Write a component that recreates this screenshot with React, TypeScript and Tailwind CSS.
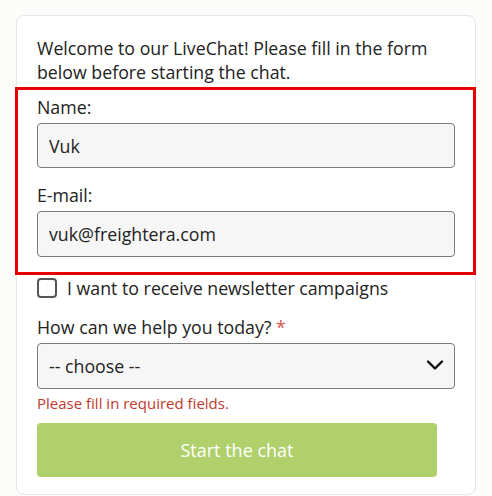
import { useState } from "react";

function FieldLabel({ children }: { children: React.ReactNode }) {
  return <label className="block text-[17.75px] leading-6 text-[#222]">{children}</label>;
}

export default function App() {
  const [name, setName] = useState("Vuk");
  const [email, setEmail] = useState("vuk@freightera.com");
  const [newsletter, setNewsletter] = useState(false);

  return (
    <div
      className="min-h-[496px] bg-[#fcfcfb] px-4 pt-[15px]"
      style={{ fontFamily: '"Open Sans", "Noto Sans", sans-serif' }}
    >
      <div className="w-[460px] rounded-lg border border-[#e6e6e6] bg-white pb-[17px] pt-[20px]">
        <p className="px-[20px] text-[17.75px] leading-6 text-[#222]">
          Welcome to our LiveChat! Please fill in the form below before starting the chat.
        </p>

        <div className="mt-[3px] -ml-[2px] w-[461px] border-[3px] border-[#e80000] px-[19px] pb-[15px] pt-[5px]">
          <FieldLabel>Name:</FieldLabel>
          <input
            value={name}
            onChange={(e) => setName(e.target.value)}
            className="mt-[4px] block h-[45px] w-[418px] rounded border border-[#7a7a7a] bg-[#f6f6f6] px-[11px] text-[17.75px] text-[#222] outline-none"
          />
          <div className="mt-[15px]">
            <FieldLabel>E-mail:</FieldLabel>
          </div>
          <input
            value={email}
            onChange={(e) => setEmail(e.target.value)}
            className="mt-[4px] block h-[46px] w-[418px] rounded border border-[#7a7a7a] bg-[#f6f6f6] px-[11px] text-[17.75px] text-[#222] outline-none"
          />
        </div>

        <div className="px-[20px]">
          <label className="mt-[1px] flex items-center gap-[10px] text-[17.75px] leading-6 text-[#222]">
            <span
              onClick={() => setNewsletter(!newsletter)}
              className={
                "inline-block h-[20px] w-[20px] shrink-0 rounded-[4px] border-2 border-[#555] " +
                (newsletter ? "bg-[#555]" : "bg-white")
              }
            />
            I want to receive newsletter campaigns
          </label>

          <div className="mt-[15px]">
            <FieldLabel>
              How can we help you today? <span className="text-[#d9534f]">*</span>
            </FieldLabel>
          </div>
          <div className="relative mt-[4px] w-[418px]">
            <select className="block h-[46px] w-full appearance-none rounded border border-[#7a7a7a] bg-[#f6f6f6] px-[11px] text-[17.75px] text-[#222] outline-none">
              <option>-- choose --</option>
            </select>
            <svg
              className="pointer-events-none absolute right-[11px] top-[14px]"
              width="18"
              height="16"
              viewBox="0 0 18 16"
              fill="none"
              stroke="#111"
              strokeWidth="2.4"
              strokeLinecap="round"
              strokeLinejoin="round"
            >
              <path d="M2 4.5l7 7 7-7" />
            </svg>
          </div>
          <p className="mt-[4px] text-[15px] leading-5 text-[#c0392b]">Please fill in required fields.</p>
          <button
            type="button"
            className="mt-[10px] block h-[54px] w-[400px] rounded bg-[#afd06b] text-[18px] font-medium text-white"
          >
            Start the chat
          </button>
        </div>
      </div>
    </div>
  );
}
